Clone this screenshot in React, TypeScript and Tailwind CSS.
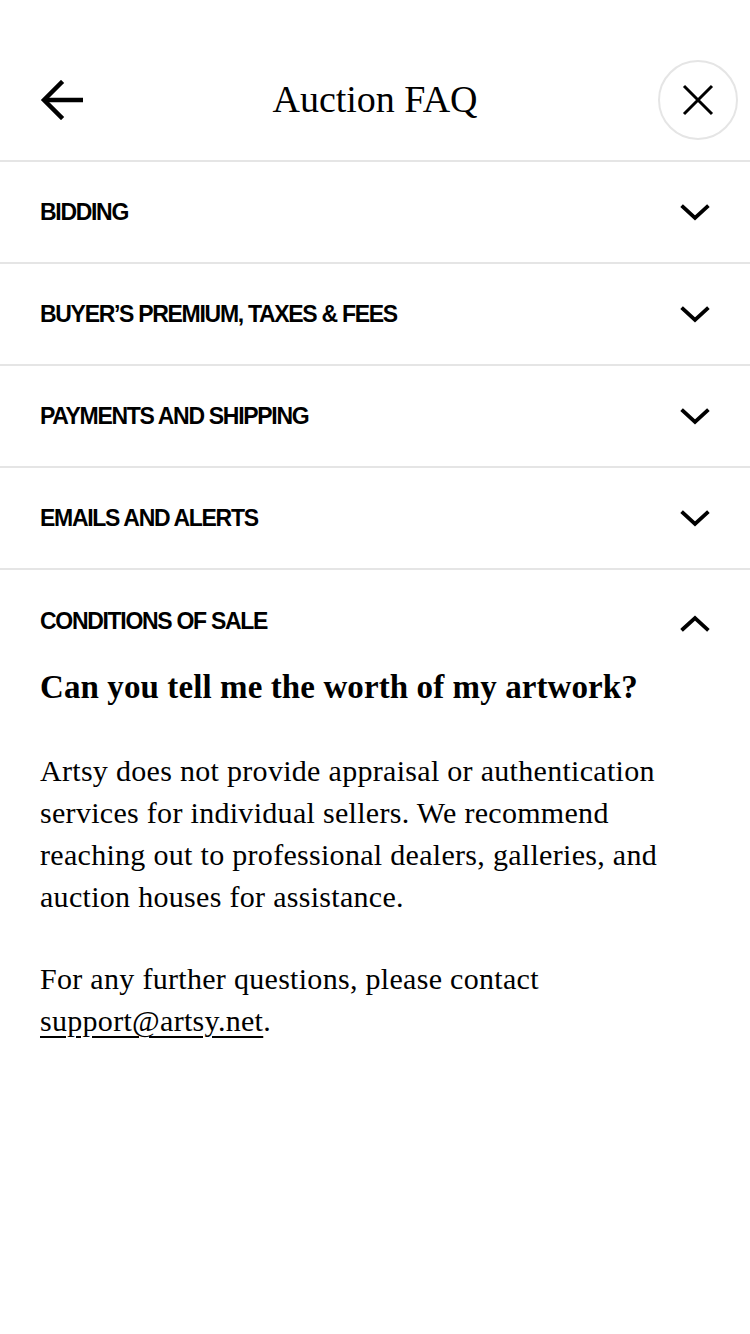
import React from "react";

const sans = { fontFamily: '"Liberation Sans", Arial, sans-serif' };
const serif = { fontFamily: '"Liberation Serif", "Times New Roman", serif' };

function ChevronDown() {
  return (
    <svg width="30" height="18" viewBox="0 0 30 18" fill="none" className="mt-[2px]">
      <path d="M3 3 L15 14 L27 3" stroke="#000" strokeWidth="3.8" strokeLinecap="square" />
    </svg>
  );
}

function ChevronUp() {
  return (
    <svg width="30" height="18" viewBox="0 0 30 18" fill="none" className="mt-[3px]">
      <path d="M3 15 L15 4 L27 15" stroke="#000" strokeWidth="3.8" strokeLinecap="square" />
    </svg>
  );
}

const rows = [
  "BIDDING",
  "BUYER\u2019S PREMIUM, TAXES & FEES",
  "PAYMENTS AND SHIPPING",
  "EMAILS AND ALERTS",
];

export default function App() {
  return (
    <div className="w-[750px] min-h-[1334px] bg-white text-black">
      {/* header */}
      <div className="pt-[40px] h-[120px] box-content grid grid-cols-[1fr_auto_1fr] items-center px-[12px] border-b-2 border-[#e5e5e5]">
        <svg width="46" height="40" viewBox="0 0 46 40" fill="none" className="justify-self-start ml-[28px]">
          <path d="M21 3 L4 20 L21 37" stroke="#000" strokeWidth="4.5" strokeLinecap="square" strokeLinejoin="miter" />
          <path d="M6 20 L43 20" stroke="#000" strokeWidth="4.5" />
        </svg>
        <div className="text-[38px] leading-none -mt-[2px]" style={serif}>
          Auction FAQ
        </div>
        <div className="justify-self-end w-[80px] h-[80px] rounded-full border-2 border-[#e5e5e5] flex items-center justify-center">
          <svg width="32" height="32" viewBox="0 0 32 32" fill="none">
            <path d="M2 2 L30 30 M30 2 L2 30" stroke="#000" strokeWidth="3" />
          </svg>
        </div>
      </div>

      {rows.map((r) => (
        <div
          key={r}
          className="h-[100px] box-content border-b-2 border-[#e5e5e5] flex items-center justify-between pl-[40px] pr-[40px]"
        >
          <span className="text-[23px] font-bold tracking-[-1.3px] leading-none" style={sans}>
            {r}
          </span>
          <ChevronDown />
        </div>
      ))}

      {/* expanded */}
      <div className="px-[40px]">
        <div className="pt-[37px] flex items-center justify-between h-[65px]">
          <span className="text-[23px] font-bold tracking-[-1.3px] leading-[28px]" style={sans}>
            CONDITIONS OF SALE
          </span>
          <ChevronUp />
        </div>
        <div className="mt-[32px] text-[33px] font-bold leading-[40px] tracking-[0.1px]" style={serif}>
          Can you tell me the worth of my artwork?
        </div>
        <div className="mt-[43px] text-[30px] leading-[42px] tracking-[0.3px]" style={serif}>
          <p>
            Artsy does not provide appraisal or authentication services for individual sellers. We recommend reaching out to professional dealers, galleries, and auction houses for assistance.
          </p>
          <p className="mt-[40px]">
            For any further questions, please contact{" "}
            <span className="underline decoration-[2px] underline-offset-[5px]">support@artsy.net</span>.
          </p>
        </div>
      </div>
    </div>
  );
}
